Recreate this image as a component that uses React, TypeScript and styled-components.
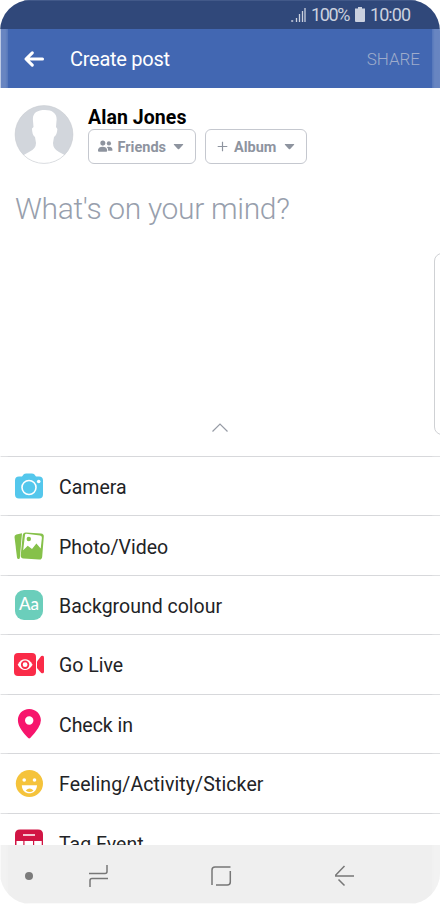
import React from 'react';
import styled, { createGlobalStyle } from 'styled-components';

const GlobalStyle = createGlobalStyle`
  * { box-sizing: border-box; }
  body { margin: 0; background: #fff; font-family: Roboto, sans-serif; overflow: hidden; }
  svg { display: block; flex: none; overflow: visible; }
`;

const Phone = styled.main`
  position: relative;
  width: 440px;
  height: 904px;
  display: flex;
  flex-direction: column;
  overflow: hidden;
  background: #fff;
  border-radius: 31px;
`;

const StatusBar = styled.header`
  height: 29px;
  flex: none;
  display: flex;
  align-items: center;
  padding: 0 0 1px 291px;
  background: #30487a;
  border-top: 1px solid #425989;
  color: #cbd1df;
`;

const StatusText = styled.span<{ $gap: number; $spacing: number }>`
  margin-left: ${(p) => p.$gap}px;
  font-size: 18px;
  line-height: 27px;
  letter-spacing: ${(p) => p.$spacing}px;
`;

const BatteryIcon = styled.svg`
  margin-left: 6px;
`;

const AppBar = styled.div`
  height: 59px;
  flex: none;
  display: flex;
  align-items: center;
  padding: 0 20px 0 24px;
  background: #4267b2;
  color: #fff;
`;

const Title = styled.h1`
  flex: 1;
  margin: 0 0 0 26px;
  font-size: 20px;
  font-weight: 400;
  line-height: 24px;
  letter-spacing: -0.27px;
`;

const ShareButton = styled.button`
  border: 0;
  padding: 1px 0 0;
  background: none;
  color: #9faccb;
  font: 300 17px/22px Roboto, sans-serif;
`;

const EdgeGlow = styled.div<{ $side: 'left' | 'right' }>`
  position: absolute;
  top: 29px;
  bottom: 0;
  ${(p) => p.$side}: 0;
  width: 8px;
  background: linear-gradient(to ${(p) => p.$side}, rgba(255, 255, 255, 0.1), rgba(255, 255, 255, 0.2) 40%);
  border-${(p) => p.$side}: 1px solid rgba(255, 255, 255, ${(p) => (p.$side === 'left' ? 0.6 : 0.1)});
  pointer-events: none;
`;

const Composer = styled.section`
  position: relative;
  height: 368px;
  flex: none;
  display: flex;
  flex-direction: column;
  padding: 17px 14px 0;
`;

const Author = styled.div`
  display: flex;
  gap: 14px;
`;

const AuthorInfo = styled.div`
  display: flex;
  flex-direction: column;
`;

const Name = styled.div`
  height: 24px;
  font-size: 19.5px;
  font-weight: 700;
  line-height: 25px;
  letter-spacing: 0.06px;
  color: #000;
`;

const Chips = styled.div`
  display: flex;
  gap: 9px;
`;

const Chip = styled.button<{ $width: number; $pad: number; $gap: number }>`
  width: ${(p) => p.$width}px;
  height: 35px;
  display: flex;
  align-items: center;
  gap: ${(p) => p.$gap}px;
  padding: 0 0 0 ${(p) => p.$pad}px;
  border: 1px solid #c5c8cf;
  border-radius: 6px;
  background: #fff;
  color: #8e949f;
  font: 700 14.5px/20px Roboto, sans-serif;
`;

const ChipLabel = styled.span`
  margin: 2px 2px 0 0;
`;

const Prompt = styled.p`
  margin: 24px 0 0 1px;
  font-size: 30px;
  font-weight: 300;
  line-height: 40px;
  letter-spacing: -0.33px;
  white-space: nowrap;
  color: #989fad;
`;

const Chevron = styled.svg`
  margin: 194px auto 0;
`;

const EdgeHandle = styled.div`
  position: absolute;
  top: 165px;
  right: -12px;
  width: 18px;
  height: 182px;
  border: 1px solid #c4c6ca;
  border-radius: 8px;
`;

const ActionList = styled.ul`
  flex: 1;
  min-height: 0;
  margin: 0;
  padding: 0;
  overflow: hidden;
  list-style: none;
`;

const Action = styled.li`
  height: 59.43px;
  display: flex;
  align-items: center;
  gap: 15px;
  padding: 2px 14px 0;
  border-top: 1px solid #d7d8db;
`;

const ActionLabel = styled.span<{ $spacing: number }>`
  padding-top: 2px;
  font-size: 19.5px;
  line-height: 24px;
  letter-spacing: ${(p) => p.$spacing}px;
  color: #222326;
  white-space: nowrap;
`;

const Swatch = styled.span`
  width: 28px;
  height: 30px;
  margin: 0 1px 2px;
  display: flex;
  align-items: center;
  justify-content: center;
  border-radius: 9px;
  background: #6bcebb;
  color: #fff;
  font: 500 17px/28px Lato, sans-serif;
  letter-spacing: -0.1px;
  padding-bottom: 2px;
`;

const NavBar = styled.nav`
  height: 59px;
  flex: none;
  display: flex;
  align-items: center;
  padding: 4px 0 0 25px;
  background: #efefef;
  border-bottom: 1px solid #fafafa;
`;

const NavIcon = styled.svg<{ $gap: number }>`
  margin-left: ${(p) => p.$gap}px;
`;

const Dot = styled.span`
  width: 8px;
  height: 8px;
  border-radius: 50%;
  background: #7b7b7b;
`;

const CameraIcon = () => (
  <svg width="30" height="30" viewBox="0 0 30 30">
    <path fill="#54c7ec" d="M5 4.500h3l2-2.600Q10.800 1.500 12 1.500h6q1.200 0 2 .4L22 4.500h3q4 0 4 4v14q0 4-4 4H5q-4 0-4-4v-14q0-4 4-4Z" />
    <circle cx="15" cy="15.500" r="7" fill="none" stroke="#fff" strokeWidth="1.600" />
    <circle cx="24.700" cy="9.500" r="1.800" fill="#fff" />
  </svg>
);

const PhotoIcon = () => (
  <svg width="30" height="30" viewBox="0 0 30 30">
    <path fill="#86c14a" d="M2.400 2.500 8 1.300 5.800 26.300 5 27Q3.300 27.300 3 25.500L.5 5Q.3 3 2.400 2.500Z" />
    <path fill="#86c14a" fillRule="evenodd" d="M12 .4 27 1.600q3 .3 2.800 3L28.200 24.800q-.3 3-3 2.800L9.500 26.500q-3-.3-2.800-3L8.700 3.300q.3-3 3.300-2.900Z M11 2.900 9.200 18.200 13.700 13.800 18 17 22.400 11.500l4.300 5 1.200-10.700q.1-2-1.900-2.200L12.300 1.700q-1.100-.1-1.300 1.200Z" />
    <circle cx="14.800" cy="7" r="2.200" fill="#86c14a" />
  </svg>
);

const LiveIcon = () => (
  <svg width="30" height="30" viewBox="0 0 30 30">
    <rect y="3" width="22" height="23" rx="4" fill="#fa2b48" />
    <path fill="#fa2b48" d="M23 11.500 27.200 6Q30 4.800 30 7.500v14q0 2.700-2.800 1.500L23 18Z" />
    <path fill="#fff" d="M3.700 14.700C7.500 7.500 14.500 7.500 18.600 14.700 14.500 21.900 7.500 21.900 3.700 14.700Z" />
    <circle cx="11.100" cy="14.700" r="3.300" fill="none" stroke="#fa2b48" strokeWidth="1.800" />
  </svg>
);

const PinIcon = () => (
  <svg width="30" height="30" viewBox="0 0 30 30">
    <path transform="translate(.2 -1)" fill="#f7156c" fillRule="evenodd" d="M15 0C8.300 0 3.700 5 3.700 11.300 3.700 17.500 9 24 14 29q1 .9 2 0 10.700-11 10.700-17.700C26.700 5 21.700 0 15 0Zm0 7.300a4.200 4.200 0 1 1 0 8.400 4.200 4.200 0 0 1 0-8.400Z" />
  </svg>
);

const SmileIcon = () => (
  <svg width="30" height="30" viewBox="0 0 30 30">
    <circle cx="15.400" cy="14.500" r="13.600" fill="#f5c33b" />
    <circle cx="10.200" cy="11" r="1.800" fill="#fff" />
    <circle cx="20.500" cy="11" r="1.800" fill="#fff" />
    <path fill="#fff" d="M7.800 16.300h15.200C22.800 21.800 19.200 24.300 15.400 24.300 11.300 24.300 8 21.800 7.800 16.300Z" />
    <path fill="#f5c33b" d="M11.700 21.500q4-3.800 7.800 0-3.800 3-7.800 0Z" />
  </svg>
);

const CalendarIcon = () => (
  <svg width="30" height="30" viewBox="0 0 30 30">
    <path fill="#d11544" d="M6 .5h18q5 0 5 5V27H1V5.500q0-5 5-5Z" />
    <path stroke="#fff" strokeWidth="1.500" d="M9 6h12" />
    <path fill="#fff" d="M2.500 12H9.300v9H2.500ZM10.500 12h8.500v9h-8.500ZM20.200 12h7.500v9H20.200Z" />
  </svg>
);

const SwatchIcon = () => <Swatch>Aa</Swatch>;

const actions = [
  { label: 'Camera', Icon: CameraIcon, spacing: 0 },
  { label: 'Photo/Video', Icon: PhotoIcon, spacing: 0 },
  { label: 'Background colour', Icon: SwatchIcon, spacing: 0 },
  { label: 'Go Live', Icon: LiveIcon, spacing: 0 },
  { label: 'Check in', Icon: PinIcon, spacing: -0.04 },
  { label: 'Feeling/Activity/Sticker', Icon: SmileIcon, spacing: 0.11 },
  { label: 'Tag Event', Icon: CalendarIcon, spacing: 0 },
];

const Caret = () => (
  <svg width="11" height="6" viewBox="0 0 11 6">
    <path fill="#8e949f" d="M1.200 0h8.600q.8 0 .3.700L6.200 4.900q-.7.700-1.400 0L.9.700Q.4 0 1.200 0Z" />
  </svg>
);

export default function App() {
  return (
    <>
      <GlobalStyle />
      <Phone>
        <StatusBar>
          <svg width="15" height="14" viewBox="0 0 15 14">
            <path stroke="currentColor" strokeWidth="1.300" d="M.2 13h2M5.500 14v-4M8.500 14V6M11.500 14V3M14 14V0" />
          </svg>
          <StatusText $gap={5} $spacing={-1.4}>100%</StatusText>
          <BatteryIcon width="10" height="15" viewBox="0 0 10 15">
            <path fill="currentColor" d="M3 0h4v1.500h3V14q0 1-1 1H1q-1 0-1-1V1.500h3Z" />
          </BatteryIcon>
          <StatusText $gap={5} $spacing={-0.9}>10:00</StatusText>
        </StatusBar>
        <AppBar>
          <svg width="20" height="16" viewBox="0 0 20 16">
            <path d="M8.300 1.800 2 8l6.300 6.200M2.500 8H18.500" fill="none" stroke="#fff" strokeWidth="3.100" strokeLinecap="round" strokeLinejoin="round" />
          </svg>
          <Title>Create post</Title>
          <ShareButton>SHARE</ShareButton>
        </AppBar>
        <Composer>
          <Author>
            <svg width="60" height="60" viewBox="0 0 60 60">
              <clipPath id="avatar"><circle cx="30" cy="29.500" r="29" /></clipPath>
              <g clipPath="url(#avatar)">
                <path fill="#d2d6dc" d="M0 0h60v60H0Z" />
                <path fill="#fff" d="M0 55.500 15 47Q22 44 22 38L21 32Q18 30 18 23.500L19.500 22 19 16C18 8 23 5 31 5s12.500 4 11.500 11L42 22l1.400 2Q43 30 40 32l-1 6Q39 44 45 47l15 8v5H0Z" />
              </g>
              <circle cx="30" cy="29.500" r="28.900" fill="none" stroke="#c9ccd2" strokeWidth=".6" />
            </svg>
            <AuthorInfo>
              <Name>Alan Jones</Name>
              <Chips>
                <Chip $width={108} $pad={9} $gap={5}>
                  <svg width="14.500" height="13" viewBox="0 0 15 13">
                    <g fill="#8e949f">
                      <circle cx="5" cy="3" r="2.600" />
                      <circle cx="11.300" cy="3.300" r="2.200" />
                      <path d="M0 10.200C0 5.500 9.500 5.500 9.500 10.200V11q0 1-1 1H1q-1 0-1-1ZM9.100 6.900Q14.800 5.900 15 10q0 1-1 1h-3.500Q10.700 8.200 9.100 6.900Z" />
                    </g>
                  </svg>
                  <ChipLabel>Friends</ChipLabel>
                  <Caret />
                </Chip>
                <Chip $width={102} $pad={11} $gap={6}>
                  <svg width="11" height="11" viewBox="0 0 11 11">
                    <path d="M5.500 .7v9.600M.7 5.500h9.600" stroke="#8e949f" strokeWidth="1.200" />
                  </svg>
                  <ChipLabel>Album</ChipLabel>
                  <Caret />
                </Chip>
              </Chips>
            </AuthorInfo>
          </Author>
          <Prompt>What's on your mind?</Prompt>
          <Chevron width="16" height="9" viewBox="0 0 16 9">
            <path d="m.5 8.500 7.500-7.500 7.500 7.500" fill="none" stroke="#969ba5" strokeWidth="1.200" />
          </Chevron>
          <EdgeHandle />
        </Composer>
        <ActionList>
          {actions.map(({ label, Icon, spacing }) => (
            <Action key={label}>
              <Icon />
              <ActionLabel $spacing={spacing}>{label}</ActionLabel>
            </Action>
          ))}
        </ActionList>
        <NavBar>
          <Dot />
          <NavIcon $gap={56} width="19" height="22" viewBox="0 0 19 22">
            <path d="M0 8.500h16q2 0 2-2V0M19 13.500H3q-2 0-2 2V22" fill="none" stroke="#777" strokeWidth="1.500" />
          </NavIcon>
          <NavIcon $gap={103} width="20" height="20" viewBox="0 0 20 20">
            <path d="M1 19V4q0-3 3-3h15.500M19.300 5v11q0 3-3 3H5" fill="none" stroke="#777" strokeWidth="1.500" />
          </NavIcon>
          <NavIcon $gap={104} width="19" height="20" viewBox="0 0 19 20">
            <path d="M9.500 0 .8 9v1H19M3.500 13.500l6 6" fill="none" stroke="#777" strokeWidth="1.500" />
          </NavIcon>
        </NavBar>
        <EdgeGlow $side="left" />
        <EdgeGlow $side="right" />
      </Phone>
    </>
  );
}
